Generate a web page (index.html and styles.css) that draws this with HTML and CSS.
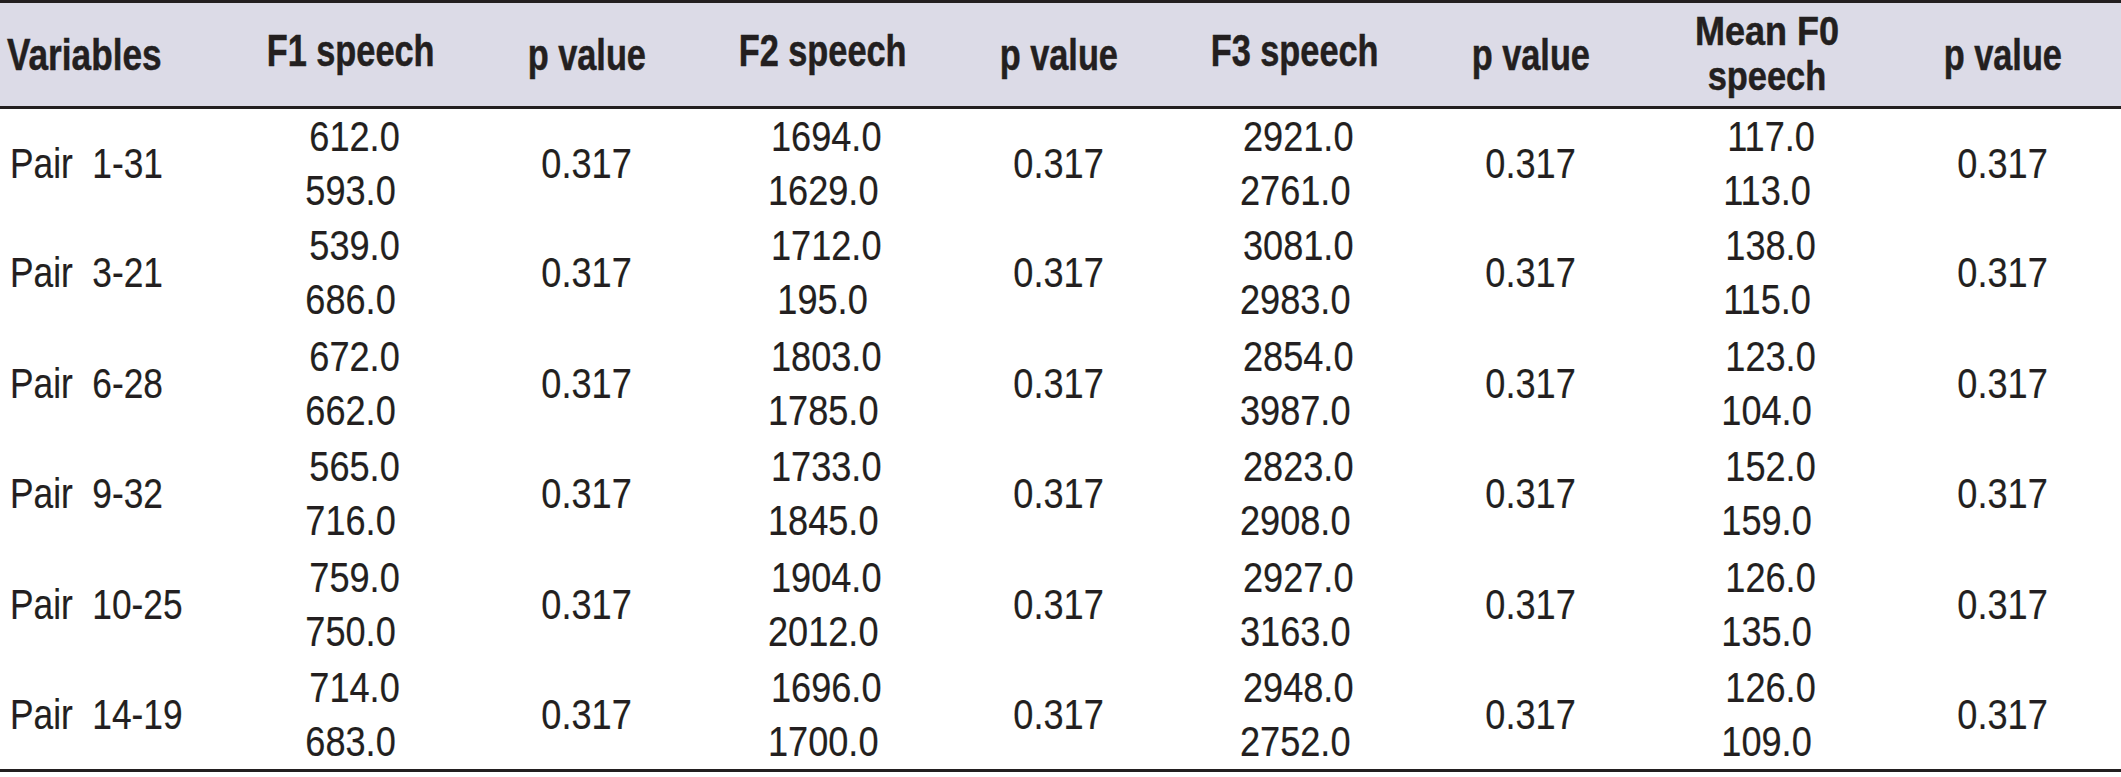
FILE: index.html
```html
<!DOCTYPE html>
<html lang="en">
<head>
<meta charset="utf-8">
<title>Formant table</title>
<link rel="stylesheet" href="styles.css">
</head>
<body>
<table class="data">
  <colgroup>
    <col class="c-var">
    <col class="c-num"><col class="c-num"><col class="c-num"><col class="c-num">
    <col class="c-num"><col class="c-num"><col class="c-num"><col class="c-num">
  </colgroup>
  <thead>
    <tr>
      <th class="h-var"><span class="t">Variables</span></th>
      <th><span class="t up">F1 speech</span></th>
      <th><span class="t">p value</span></th>
      <th><span class="t up">F2 speech</span></th>
      <th><span class="t">p value</span></th>
      <th><span class="t up">F3 speech</span></th>
      <th><span class="t">p value</span></th>
      <th><span class="t two one">Mean F0</span><span class="t two">speech</span></th>
      <th><span class="t">p value</span></th>
    </tr>
  </thead>
  <tbody>
    <tr>
      <td class="var"><span class="t">Pair&nbsp; 1-31</span></td>
      <td><div class="a"><span class="t">612.0</span></div><div><span class="t">593.0</span></div></td><td><span class="t">0.317</span></td>
      <td><div class="a"><span class="t">1694.0</span></div><div><span class="t">1629.0</span></div></td><td><span class="t">0.317</span></td>
      <td><div class="a"><span class="t">2921.0</span></div><div><span class="t">2761.0</span></div></td><td><span class="t">0.317</span></td>
      <td><div class="a"><span class="t">117.0</span></div><div><span class="t">113.0</span></div></td><td><span class="t">0.317</span></td>
    </tr>
    <tr>
      <td class="var"><span class="t">Pair&nbsp; 3-21</span></td>
      <td><div class="a"><span class="t">539.0</span></div><div><span class="t">686.0</span></div></td><td><span class="t">0.317</span></td>
      <td><div class="a"><span class="t">1712.0</span></div><div><span class="t">195.0</span></div></td><td><span class="t">0.317</span></td>
      <td><div class="a"><span class="t">3081.0</span></div><div><span class="t">2983.0</span></div></td><td><span class="t">0.317</span></td>
      <td><div class="a"><span class="t">138.0</span></div><div><span class="t">115.0</span></div></td><td><span class="t">0.317</span></td>
    </tr>
    <tr>
      <td class="var"><span class="t">Pair&nbsp; 6-28</span></td>
      <td><div class="a"><span class="t">672.0</span></div><div><span class="t">662.0</span></div></td><td><span class="t">0.317</span></td>
      <td><div class="a"><span class="t">1803.0</span></div><div><span class="t">1785.0</span></div></td><td><span class="t">0.317</span></td>
      <td><div class="a"><span class="t">2854.0</span></div><div><span class="t">3987.0</span></div></td><td><span class="t">0.317</span></td>
      <td><div class="a"><span class="t">123.0</span></div><div><span class="t">104.0</span></div></td><td><span class="t">0.317</span></td>
    </tr>
    <tr>
      <td class="var"><span class="t">Pair&nbsp; 9-32</span></td>
      <td><div class="a"><span class="t">565.0</span></div><div><span class="t">716.0</span></div></td><td><span class="t">0.317</span></td>
      <td><div class="a"><span class="t">1733.0</span></div><div><span class="t">1845.0</span></div></td><td><span class="t">0.317</span></td>
      <td><div class="a"><span class="t">2823.0</span></div><div><span class="t">2908.0</span></div></td><td><span class="t">0.317</span></td>
      <td><div class="a"><span class="t">152.0</span></div><div><span class="t">159.0</span></div></td><td><span class="t">0.317</span></td>
    </tr>
    <tr>
      <td class="var"><span class="t">Pair&nbsp; 10-25</span></td>
      <td><div class="a"><span class="t">759.0</span></div><div><span class="t">750.0</span></div></td><td><span class="t">0.317</span></td>
      <td><div class="a"><span class="t">1904.0</span></div><div><span class="t">2012.0</span></div></td><td><span class="t">0.317</span></td>
      <td><div class="a"><span class="t">2927.0</span></div><div><span class="t">3163.0</span></div></td><td><span class="t">0.317</span></td>
      <td><div class="a"><span class="t">126.0</span></div><div><span class="t">135.0</span></div></td><td><span class="t">0.317</span></td>
    </tr>
    <tr>
      <td class="var"><span class="t">Pair&nbsp; 14-19</span></td>
      <td><div class="a"><span class="t">714.0</span></div><div><span class="t">683.0</span></div></td><td><span class="t">0.317</span></td>
      <td><div class="a"><span class="t">1696.0</span></div><div><span class="t">1700.0</span></div></td><td><span class="t">0.317</span></td>
      <td><div class="a"><span class="t">2948.0</span></div><div><span class="t">2752.0</span></div></td><td><span class="t">0.317</span></td>
      <td><div class="a"><span class="t">126.0</span></div><div><span class="t">109.0</span></div></td><td><span class="t">0.317</span></td>
    </tr>
  </tbody>
</table>
</body>
</html>
```
FILE: styles.css
```css
html, body {
  margin: 0;
  padding: 0;
  background: #ffffff;
}

body {
  font-family: "Liberation Sans", Arial, sans-serif;
  color: #231f20;
}

.data {
  width: 2121px;
  border-collapse: collapse;
  table-layout: fixed;
}

.c-var { width: 233px; }
.c-num { width: 236px; }

.t {
  display: inline-block;
  white-space: nowrap;
}

/* header */
.data th {
  height: 103px;
  padding: 0;
  background: #dcdbe7;
  border-top: 3px solid #231f20;
  border-bottom: 3px solid #231f20;
  font-weight: bold;
  font-size: 44px;
  line-height: 40px;
  text-align: center;
  vertical-align: middle;
  -webkit-text-stroke: 0.5px #231f20;
}

.data th .t {
  transform: scaleX(0.78);
}

.data th.h-var {
  text-align: left;
  padding-left: 7px;
}

.data th.h-var .t {
  transform-origin: left center;
  transform: scaleX(0.8);
}

.data th .up {
  margin-bottom: 7px;
}

.data th .two {
  display: block;
  font-size: 40px;
  line-height: 45px;
  transform: scaleX(0.86);
}

.data th .one {
  transform: scaleX(0.9);
}

.data th .two + .two {
  margin-bottom: 2px;
}

/* body */
.data tbody tr {
  height: 110.5px;
}

.data tbody tr:last-child td {
  border-bottom: 3px solid #231f20;
}

.data td {
  padding: 0;
  font-size: 42px;
  line-height: 54px;
  text-align: center;
  vertical-align: middle;
  -webkit-text-stroke: 0.2px #231f20;
}

.data td .t {
  transform: scaleX(0.86);
}

.data td.var {
  text-align: left;
  padding-left: 10px;
}

.data td.var .t {
  transform-origin: left center;
  transform: scaleX(0.84);
}

.data td .a {
  padding-left: 7px;
}
```
